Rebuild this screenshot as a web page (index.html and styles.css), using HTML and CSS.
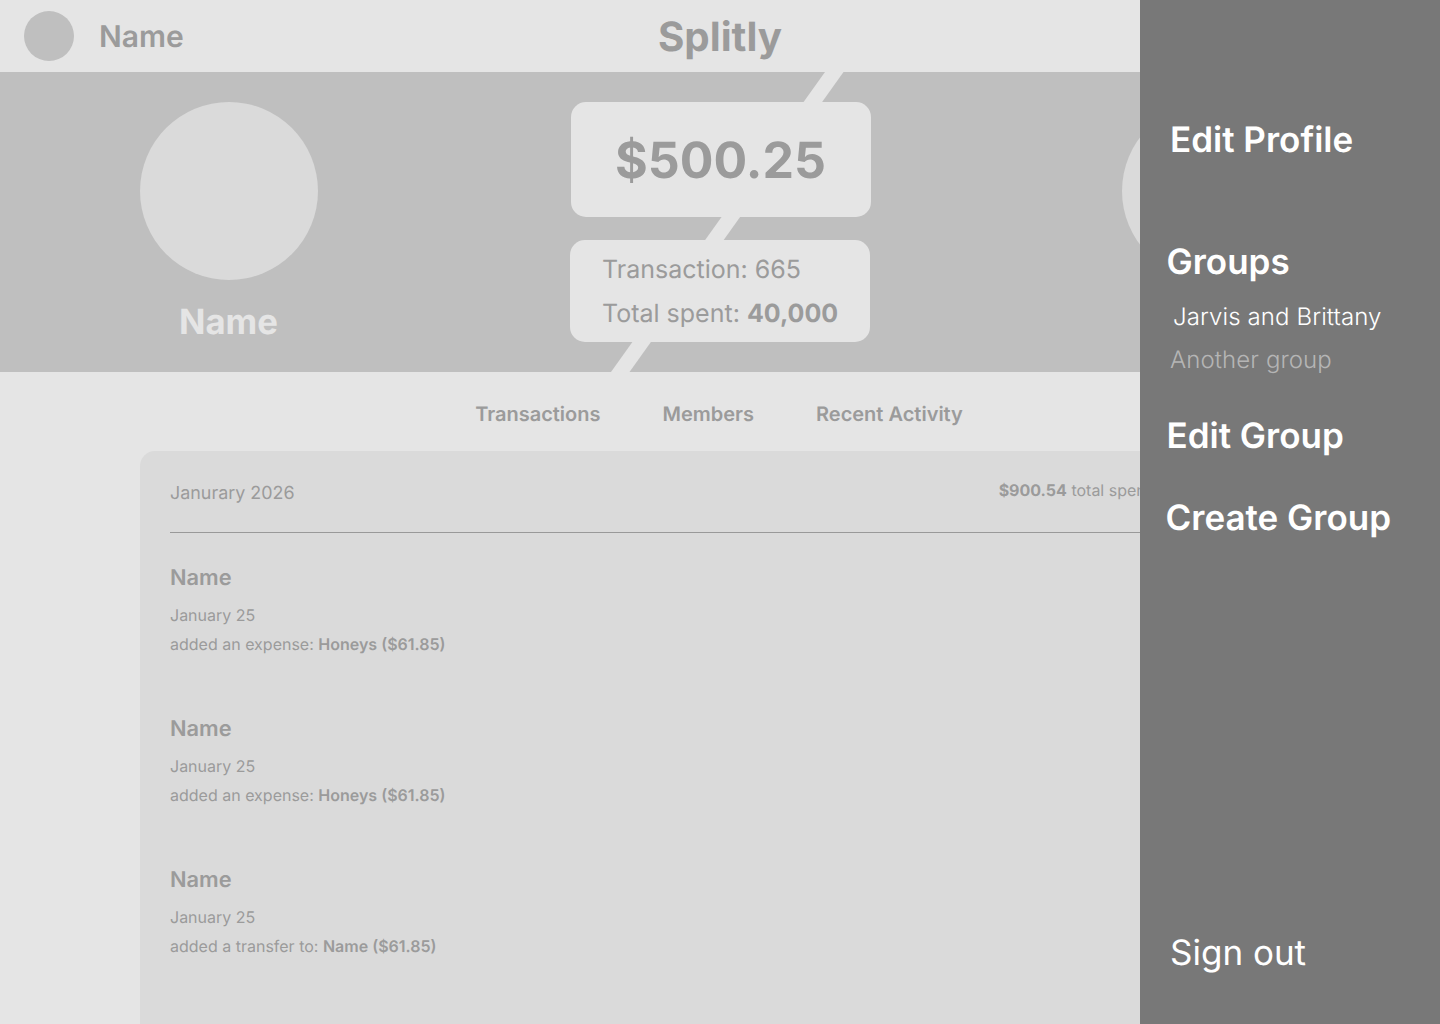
FILE: index.html
```html
<!DOCTYPE html>
<html lang="en">
<head>
<meta charset="utf-8">
<title>Splitly</title>
<link rel="stylesheet" href="styles.css">
</head>
<body>
<div class="page">
  <header class="topbar">
    <div class="user"><span class="mini-avatar"></span><span class="user-name">Name</span></div>
    <h1 class="brand">Splitly</h1>
  </header>
  <section class="hero">
    <svg class="stripe" width="1440" height="300" viewBox="0 0 1440 300" aria-hidden="true"><polygon points="825,0 843.500,0 629.500,300 611,300"/></svg>
    <div class="person">
      <div class="avatar"></div>
      <div class="person-name">Name</div>
    </div>
    <div class="summary">
      <div class="balance">$500.25</div>
      <div class="stats">
        <div>Transaction: 665</div>
        <div>Total spent: <b>40,000</b></div>
      </div>
    </div>
    <div class="person">
      <div class="avatar"></div>
    </div>
  </section>
  <nav class="tabs">
    <a>Transactions</a><a>Members</a><a>Recent Activity</a>
  </nav>
  <main class="card">
    <div class="card-head">
      <span class="month">Janurary 2026</span>
      <span class="month-total"><b>$900.54</b> total spent</span>
    </div>
    <article class="entry">
      <h2>Name</h2>
      <p>January 25</p>
      <p>added an expense: <b>Honeys ($61.85)</b></p>
    </article>
    <article class="entry">
      <h2>Name</h2>
      <p>January 25</p>
      <p>added an expense: <b>Honeys ($61.85)</b></p>
    </article>
    <article class="entry">
      <h2>Name</h2>
      <p>January 25</p>
      <p>added a transfer to: <b>Name ($61.85)</b></p>
    </article>
  </main>
  <aside class="drawer">
    <a class="item edit-profile">Edit Profile</a>
    <a class="item groups">Groups</a>
    <a class="group active">Jarvis and Brittany</a>
    <a class="group other">Another group</a>
    <a class="item edit-group">Edit Group</a>
    <a class="item create-group">Create Group</a>
    <a class="signout">Sign out</a>
  </aside>
</div>
</body>
</html>
```
FILE: styles.css
```css
* { box-sizing: border-box; margin: 0; padding: 0; }
html, body { height: 100%; overflow: hidden; }
body { background: #e5e5e5; font-family: Inter, "Liberation Sans", sans-serif; color: #9b9b9b; text-rendering: geometricPrecision; }
.page { position: relative; width: 1440px; height: 1024px; overflow: hidden; background: #e5e5e5; }

.topbar { position: relative; height: 72px; display: flex; align-items: center; justify-content: center; }
.user { position: absolute; left: 24px; top: 11px; display: flex; align-items: center; gap: 25px; }
.mini-avatar { width: 50px; height: 50px; border-radius: 50%; background: #bfbfbf; }
.user-name { padding-top: 2px; font-size: 30px; font-weight: 600; }
.brand { padding-top: 2px; font-size: 40.300px; font-weight: 700; line-height: 76px; }

.hero { position: relative; height: 300px; background: #bfbfbf; display: flex; justify-content: space-between; padding: 30px 140px 0; }
.stripe { position: absolute; left: 0; top: 0; fill: #e5e5e5; }
.person { position: relative; width: 178px; }
.avatar { width: 178px; height: 178px; border-radius: 50%; background: #dadada; }
.person-name { margin-top: 20px; padding-right: 1px; text-align: center; font-size: 34.700px; font-weight: 700; line-height: 44px; color: #e5e5e5; }
.summary { position: relative; width: 300px; }
.balance { width: 300px; height: 115px; margin-left: 1px; padding-right: 1px; border-radius: 15px; background: #e5e5e5; font-size: 50px; font-weight: 700; line-height: 119px; text-align: center; }
.stats { width: 300px; height: 102px; margin-top: 23px; padding: 8px 0 0 32px; border-radius: 15px; background: #e5e5e5; font-size: 25px; line-height: 44px; }
.stats b { font-weight: 700; }

.tabs { display: flex; justify-content: center; gap: 62px; height: 79px; padding: 28px 2px 0 0; font-size: 20px; font-weight: 600; line-height: 28px; }

.card { width: 1160px; height: 700px; margin-left: 140px; padding: 0 30px; border-radius: 15px; background: #dadada; }
.card-head { display: flex; justify-content: space-between; align-items: center; height: 82px; border-bottom: 1px solid #999; }
.month { font-size: 17.900px; margin-top: 3px; }
.month-total { font-size: 16px; margin: 0 119px 4px 0; }
.month-total b { font-weight: 700; }
.entry { height: 151px; padding-top: 28px; }
.entry h2 { font-size: 21.800px; font-weight: 600; line-height: 34px; margin-bottom: 6px; }
.entry p { font-size: 16px; line-height: 29px; }
.entry b { font-weight: 600; }

.drawer { position: absolute; right: 0; top: 0; width: 300px; height: 1024px; background: #787878; color: #fff; display: flex; flex-direction: column; align-items: flex-start; }
.drawer a { display: block; white-space: nowrap; }
.item { font-size: 35px; font-weight: 600; line-height: 44px; }
.edit-profile { margin: 118px 0 0 30px; }
.groups { margin: 78px 0 0 26.500px; }
.group { font-size: 24px; font-weight: 350; line-height: 32px; letter-spacing: 0.1px; }
.active { margin: 17px 0 0 33px; }
.other { margin: 11px 0 0 30px; color: #b5b5b5; }
.edit-group { margin: 38px 0 0 26.500px; }
.create-group { margin: 38px 0 0 25.500px; }
.signout { margin: auto 0 49px 30px; font-size: 35px; line-height: 44px; }
```
